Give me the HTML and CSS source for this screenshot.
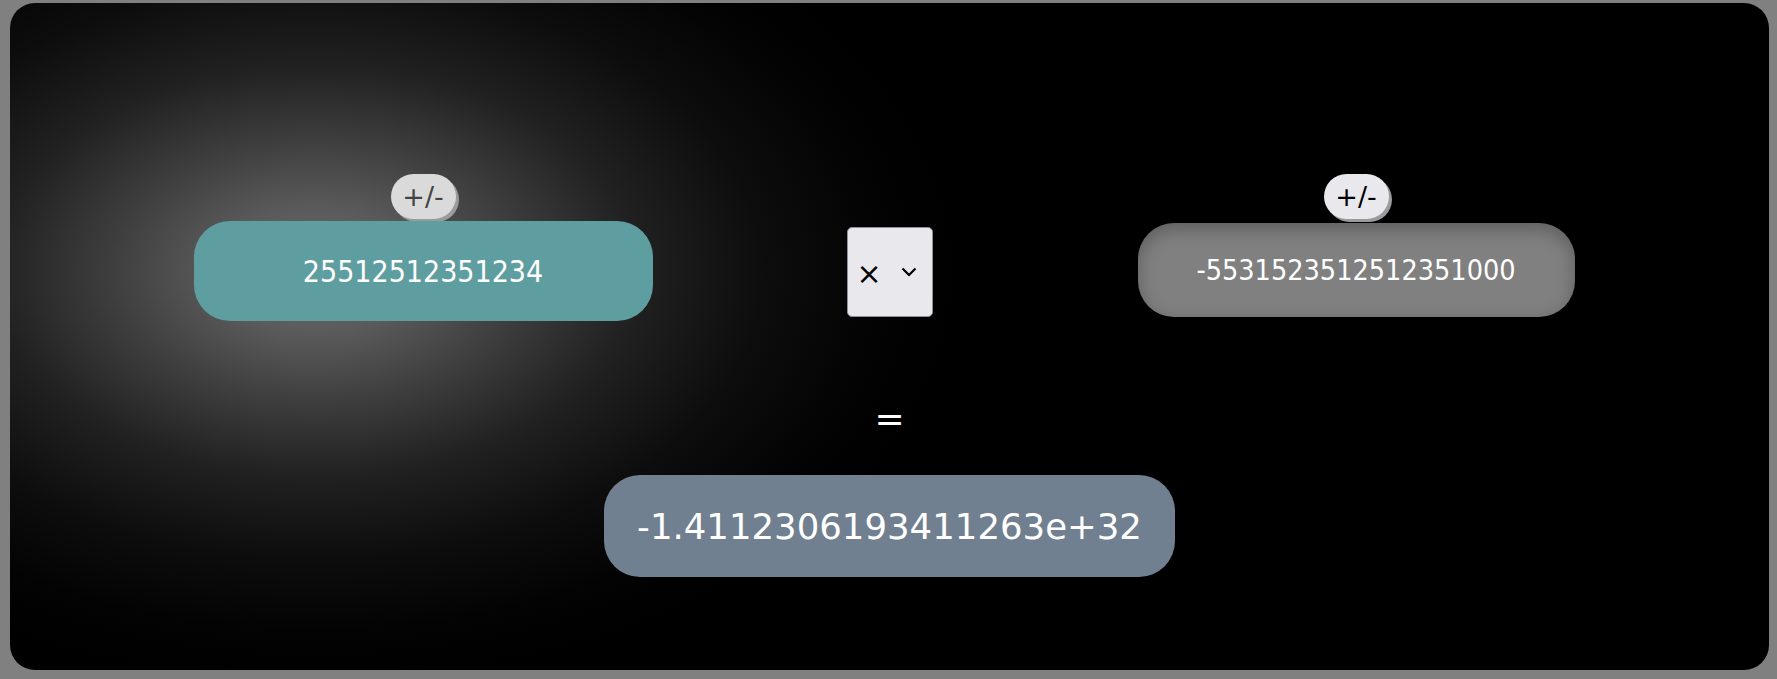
FILE: index.html
```html
<!DOCTYPE html>
<html lang="en">
<head>
<meta charset="utf-8">
<title>Calculator</title>
<link rel="stylesheet" href="styles.css">
</head>
<body>
<main class="calc">
  <section class="operands">
    <div class="operand">
      <button class="sign sign-dim" type="button">+/-</button>
      <input class="num num-a" type="text" value="25512512351234">
    </div>
    <div class="operator">
      <span class="op-symbol">×</span>
      <svg class="chev" width="16" height="10" viewBox="0 0 16 10"><path d="M1.5 1.5 L8 8 L14.5 1.5" fill="none" stroke="#000" stroke-width="2.2"/></svg>
    </div>
    <div class="operand">
      <button class="sign" type="button">+/-</button>
      <input class="num num-b" type="text" value="-5531523512512351000">
    </div>
  </section>
  <section class="result-area">
    <div class="equals">=</div>
    <div class="result">-1.4112306193411263e+32</div>
  </section>
</main>
</body>
</html>
```
FILE: styles.css
```css
html, body {
  margin: 0;
  padding: 0;
}
body {
  background: #808080;
  padding: 3px 8px 0 10px;
  font-family: "DejaVu Sans", sans-serif;
}
.calc {
  height: 667px;
  border-radius: 25px;
  background-color: #000;
  background-image: radial-gradient(ellipse 640px 410px at 305px 268px, #6b6b6b 0%, #5b5b5b 15%, #3e3e3e 32%, #212121 50%, #0d0d0d 70%, #030303 88%, #000 100%);
  box-sizing: border-box;
  padding-top: 171px;
  display: flex;
  flex-direction: column;
  align-items: center;
}
.operands {
  display: grid;
  grid-template-columns: repeat(3, 466.5px);
  align-items: start;
  justify-items: center;
}
.operand {
  display: flex;
  flex-direction: column;
  align-items: center;
  gap: 2px;
}
.sign {
  width: 65px;
  height: 45px;
  border: none;
  border-radius: 23px;
  background: #e9e9ed;
  color: #000;
  box-shadow: 3px 3px 0 #9b9b9b;
  font-family: "DejaVu Sans", sans-serif;
  font-size: 27px;
  line-height: 45px;
  padding: 0;
  cursor: pointer;
}
.sign-dim {
  background: #dadada;
  color: #444;
}
.num {
  border: none;
  outline: none;
  color: #fff;
  text-align: center;
  font-family: "DejaVu Sans Condensed", "DejaVu Sans", sans-serif;
  font-stretch: condensed;
  padding: 0;
  margin: 0;
  box-sizing: border-box;
}
.num-a {
  width: 459px;
  height: 100px;
  border-radius: 36px;
  background: #5f9ea0;
  font-size: 30px;
}
.num-b {
  width: 437px;
  height: 94px;
  margin-top: 2px;
  border-radius: 36px;
  background: #808080;
  font-size: 28.5px;
  box-shadow: inset 0 6px 18px rgba(0, 0, 0, 0.28);
}
.operator {
  width: 86px;
  height: 90px;
  margin-top: 53px;
  box-sizing: border-box;
  border: 1.5px solid #8f8f9d;
  border-radius: 5px;
  background: #e9e9ed;
  display: flex;
  align-items: center;
  padding-left: 9px;
  gap: 19px;
}
.op-symbol {
  font-size: 30px;
  line-height: 1;
  color: #000;
  margin-top: 4px;
}
.chev {
  display: block;
}
.result-area {
  display: flex;
  flex-direction: column;
  align-items: center;
}
.equals {
  color: #fff;
  font-size: 36px;
  line-height: 40px;
  margin-top: 78px;
}
.result {
  margin-top: 36px;
  width: 571px;
  height: 102px;
  border-radius: 36px;
  background: #708090;
  color: #fff;
  font-size: 35.5px;
  display: flex;
  align-items: center;
  justify-content: center;
}
```
